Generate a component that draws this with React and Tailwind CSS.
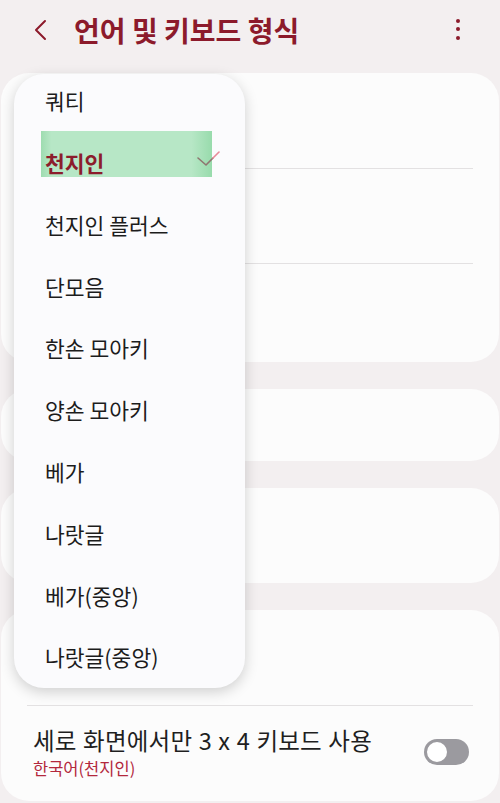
import React from "react";

const items = ["쿼티", "천지인", "천지인 플러스", "단모음", "한손 모아키", "양손 모아키", "베가", "나랏글", "베가(중앙)", "나랏글(중앙)"];

export default function App() {
  return (
    <div className="relative w-[500px] h-[803px] overflow-hidden bg-[#f3eff0]" style={{ fontFamily: '"Noto Sans CJK KR", "Noto Sans", sans-serif' }}>
      {/* header */}
      <div className="h-[62px] flex items-center pl-[33px] pr-[40px]">
        <svg width="16" height="22" viewBox="0 0 16 22" className="shrink-0 mt-[-2px]">
          <path d="M12 2 L3 11 L12 20" fill="none" stroke="#8c1a2b" strokeWidth="2" strokeLinecap="round" strokeLinejoin="round" />
        </svg>
        <div className="ml-[25px] text-[28px] font-bold text-[#8c1a2b] leading-none tracking-[0px] mt-[-2px]">언어 및 키보드 형식</div>
        <div className="ml-auto flex flex-col items-center gap-[4.5px] mt-[-4px]">
          <span className="w-[4px] h-[4px] rounded-full bg-[#8c1a2b]" />
          <span className="w-[4px] h-[4px] rounded-full bg-[#8c1a2b]" />
          <span className="w-[4px] h-[4px] rounded-full bg-[#8c1a2b]" />
        </div>
      </div>

      {/* cards */}
      <div className="flex flex-col gap-[27px] mt-[11px] px-[1px]">
        <div className="h-[289px] rounded-[28px] bg-[#fcfcfc] flex flex-col px-[26px]">
          <div className="h-[96px] border-b border-[#e3e1e2]" />
          <div className="h-[95px] border-b border-[#e3e1e2]" />
          <div className="flex-1" />
        </div>
        <div className="h-[72px] rounded-[28px] bg-[#fcfcfc]" />
        <div className="h-[95px] rounded-[28px] bg-[#fcfcfc]" />
        <div className="h-[191px] rounded-[28px] bg-[#fcfcfc] flex flex-col px-[26px]">
          <div className="h-[96px] border-b border-[#e3e1e2]" />
          <div className="flex-1 flex items-center pl-[6px] pr-[4px] pb-[2px]">
            <div className="flex flex-col">
              <div className="text-[23.5px] text-[#1f1f1f] leading-[28px] tracking-[0.2px] [word-spacing:1px]">세로 화면에서만 3 x 4 키보드 사용</div>
              <div className="text-[16.5px] text-[#b3283d] leading-[22px] mt-[3px]">한국어(천지인)</div>
            </div>
            <div className="ml-auto w-[45px] h-[26px] rounded-full bg-[#9b9a9f] relative mt-[-2px]">
              <div className="absolute left-[1px] top-[1px] w-[24px] h-[24px] rounded-full bg-white border-[2px] border-[#9b9a9f]" />
            </div>
          </div>
        </div>
      </div>

      {/* dropdown menu */}
      <div className="absolute left-[14px] top-[74px] w-[231px] h-[614px] rounded-[30px] bg-[#fbfbfd] shadow-[0_4px_14px_rgba(0,0,0,0.18)]">
        <div className="flex flex-col mt-[-4px]">
          {items.map((t, i) => (
            <div key={t} className="h-[61.8px] flex items-center pl-[31px] relative">
              {i === 1 && (
                <div className="absolute left-[27px] top-[-1px] w-[171px] h-[46px] bg-[linear-gradient(90deg,#9edcb0_0%,#b7e7c6_6%,#b7e7c6_88%,#98dbac_100%)]" />
              )}
              {i === 1 ? (
                <>
                  <span className="relative text-[21.5px] font-bold text-[#8c1d2c] leading-none">{t}</span>
                  <svg className="absolute left-[182px] top-[18px]" width="26" height="18" viewBox="0 0 26 18">
                    <path d="M2 8 L10 15 L17 8" fill="none" stroke="#8f7570" strokeWidth="1.6" strokeLinecap="round" strokeLinejoin="round" />
                    <path d="M17 8 L23 2" fill="none" stroke="#e88a98" strokeWidth="1.6" strokeLinecap="round" />
                  </svg>
                </>
              ) : (
                <span className="text-[21.5px] text-[#1c1c1c] leading-none">{t}</span>
              )}
            </div>
          ))}
        </div>
      </div>
    </div>
  );
}
